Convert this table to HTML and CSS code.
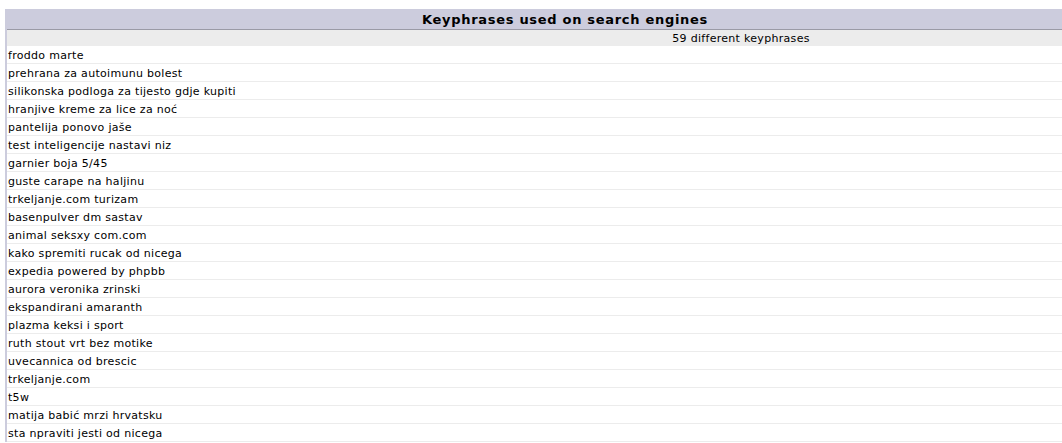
FILE: index.html
```html
<!DOCTYPE html>
<html lang="hr">
<head>
    <meta charset="UTF-8">
    <title>Keyphrases used on search engines</title>
    <link rel="stylesheet" href="styles.css">
</head>
<body>

<table class="aws_border">
    <tr><td class="aws_title">Keyphrases used on search engines</td></tr>
    <tr><td class="aws_inner">
        <table class="aws_data">
            <tr class="aws_head"><th>59 different keyphrases</th></tr>
            <tr><td>froddo marte</td></tr>
            <tr><td>prehrana za autoimunu bolest</td></tr>
            <tr><td>silikonska podloga za tijesto gdje kupiti</td></tr>
            <tr><td>hranjive kreme za lice za noć</td></tr>
            <tr><td>pantelija ponovo jaše</td></tr>
            <tr><td>test inteligencije nastavi niz</td></tr>
            <tr><td>garnier boja 5/45</td></tr>
            <tr><td>guste carape na haljinu</td></tr>
            <tr><td>trkeljanje.com turizam</td></tr>
            <tr><td>basenpulver dm sastav</td></tr>
            <tr><td>animal seksxy com.com</td></tr>
            <tr><td>kako spremiti rucak od nicega</td></tr>
            <tr><td>expedia powered by phpbb</td></tr>
            <tr><td>aurora veronika zrinski</td></tr>
            <tr><td>ekspandirani amaranth</td></tr>
            <tr><td>plazma keksi i sport</td></tr>
            <tr><td>ruth stout vrt bez motike</td></tr>
            <tr><td>uvecannica od brescic</td></tr>
            <tr><td>trkeljanje.com</td></tr>
            <tr><td>t5w</td></tr>
            <tr><td>matija babić mrzi hrvatsku</td></tr>
            <tr><td>sta npraviti jesti od nicega</td></tr>
        </table>
    </td></tr>
</table>

</body>
</html>
```

FILE: styles.css
```css
html, body {
    overflow: hidden;
}
body {
    font-family: "DejaVu Sans", Verdana, sans-serif;
    font-size: 11px;
    letter-spacing: 0.3px;
    color: #000000;
    background-color: #FFFFFF;
    margin: 9px 0 0 5px;
}
table {
    border-collapse: collapse;
}
.aws_border {
    width: 1057px;
    background-color: #CCCCDD;
    border-left: 2px solid #CCCCDD;
}
.aws_border td {
    padding: 0;
}
.aws_title {
    height: 20px;
    font-size: 13px;
    font-weight: bold;
    letter-spacing: 0.7px;
    text-align: center;
    padding: 0 0 0 61px !important;
    border-bottom: 1px solid #9a9aa6;
}
.aws_data {
    width: 100%;
    background-color: #FFFFFF;
}
.aws_head th {
    height: 16px;
    font-weight: normal;
    background-color: #ECECEC;
    text-align: center;
    padding: 0 0 0 413px;
}
.aws_data td {
    height: 15px;
    padding: 2px 0 0 1px;
    border-bottom: 1px solid #ECECEC;
    white-space: nowrap;
}
```
